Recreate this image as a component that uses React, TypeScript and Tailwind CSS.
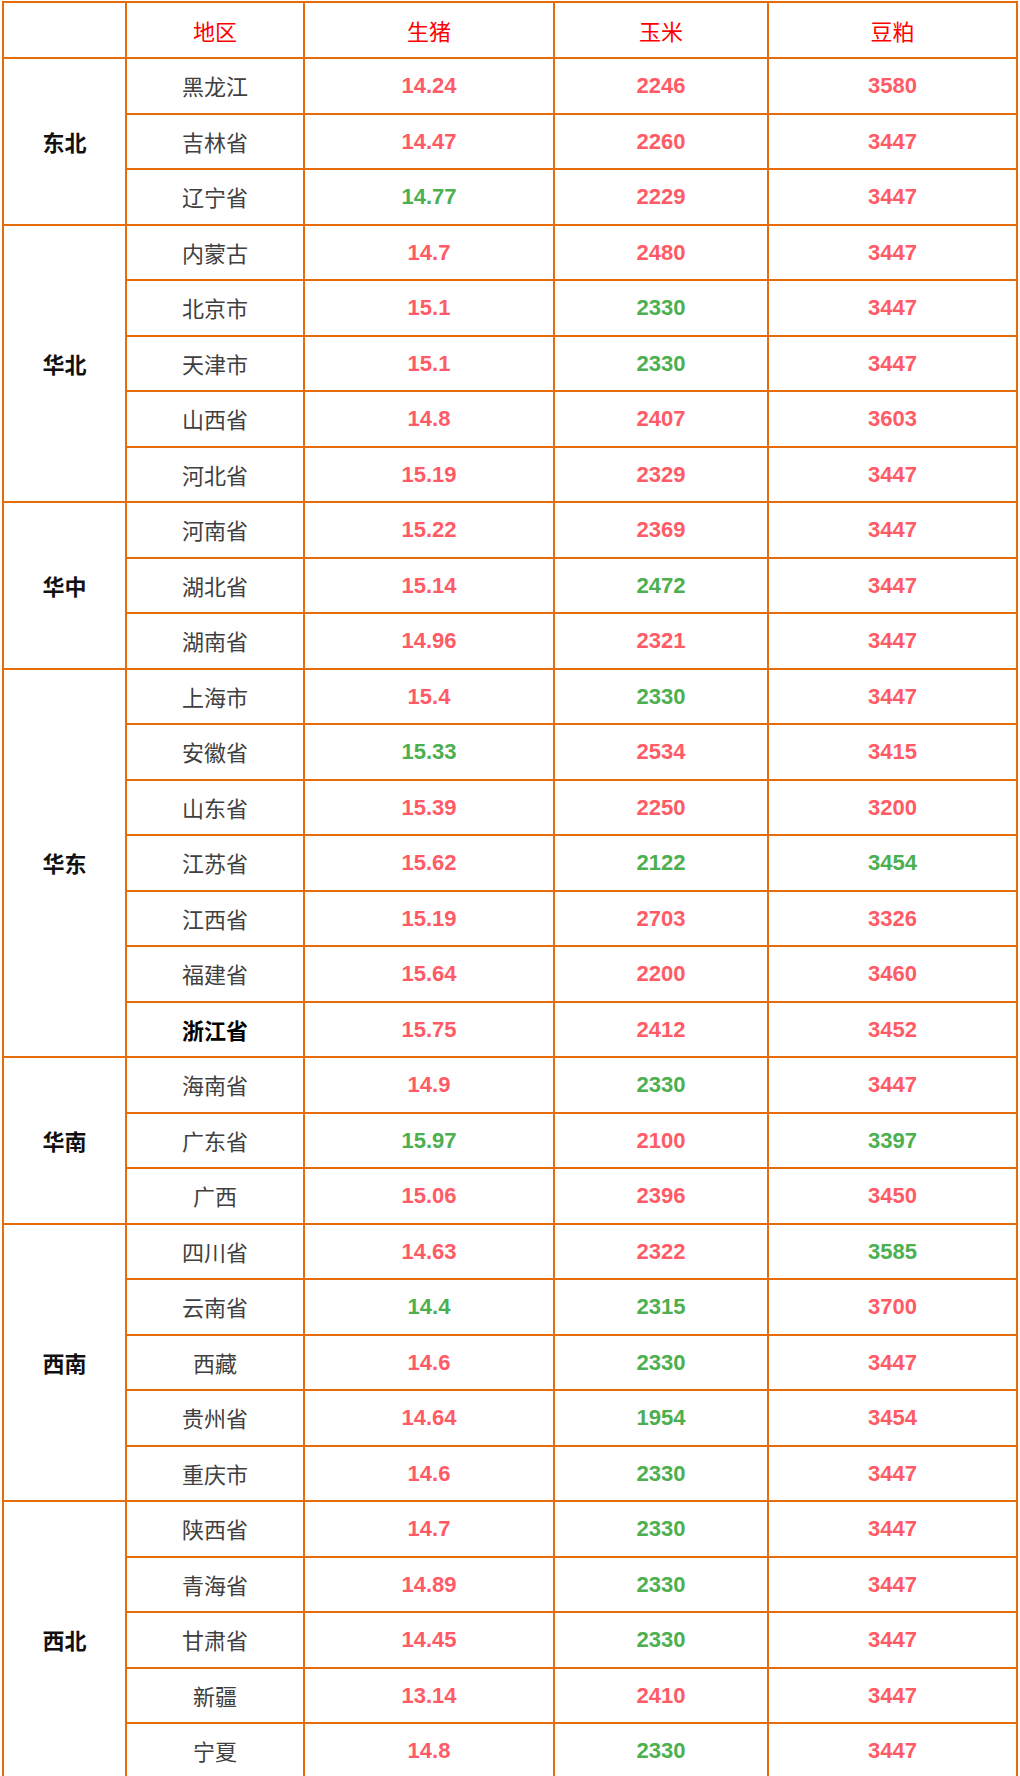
import React from 'react';

type Tone = 'r' | 'g';

interface Row {
  name: string;
  pig: [string, Tone];
  corn: [string, Tone];
  meal: [string, Tone];
  strong?: boolean;
}

interface Region {
  region: string;
  rows: Row[];
}

const r = (v: string): [string, Tone] => [v, 'r'];
const g = (v: string): [string, Tone] => [v, 'g'];

const data: Region[] = [
  {
    region: '东北',
    rows: [
      { name: '黑龙江', pig: r('14.24'), corn: r('2246'), meal: r('3580') },
      { name: '吉林省', pig: r('14.47'), corn: r('2260'), meal: r('3447') },
      { name: '辽宁省', pig: g('14.77'), corn: r('2229'), meal: r('3447') },
    ],
  },
  {
    region: '华北',
    rows: [
      { name: '内蒙古', pig: r('14.7'), corn: r('2480'), meal: r('3447') },
      { name: '北京市', pig: r('15.1'), corn: g('2330'), meal: r('3447') },
      { name: '天津市', pig: r('15.1'), corn: g('2330'), meal: r('3447') },
      { name: '山西省', pig: r('14.8'), corn: r('2407'), meal: r('3603') },
      { name: '河北省', pig: r('15.19'), corn: r('2329'), meal: r('3447') },
    ],
  },
  {
    region: '华中',
    rows: [
      { name: '河南省', pig: r('15.22'), corn: r('2369'), meal: r('3447') },
      { name: '湖北省', pig: r('15.14'), corn: g('2472'), meal: r('3447') },
      { name: '湖南省', pig: r('14.96'), corn: r('2321'), meal: r('3447') },
    ],
  },
  {
    region: '华东',
    rows: [
      { name: '上海市', pig: r('15.4'), corn: g('2330'), meal: r('3447') },
      { name: '安徽省', pig: g('15.33'), corn: r('2534'), meal: r('3415') },
      { name: '山东省', pig: r('15.39'), corn: r('2250'), meal: r('3200') },
      { name: '江苏省', pig: r('15.62'), corn: g('2122'), meal: g('3454') },
      { name: '江西省', pig: r('15.19'), corn: r('2703'), meal: r('3326') },
      { name: '福建省', pig: r('15.64'), corn: r('2200'), meal: r('3460') },
      { name: '浙江省', pig: r('15.75'), corn: r('2412'), meal: r('3452'), strong: true },
    ],
  },
  {
    region: '华南',
    rows: [
      { name: '海南省', pig: r('14.9'), corn: g('2330'), meal: r('3447') },
      { name: '广东省', pig: g('15.97'), corn: r('2100'), meal: g('3397') },
      { name: '广西', pig: r('15.06'), corn: r('2396'), meal: r('3450') },
    ],
  },
  {
    region: '西南',
    rows: [
      { name: '四川省', pig: r('14.63'), corn: r('2322'), meal: g('3585') },
      { name: '云南省', pig: g('14.4'), corn: g('2315'), meal: r('3700') },
      { name: '西藏', pig: r('14.6'), corn: g('2330'), meal: r('3447') },
      { name: '贵州省', pig: r('14.64'), corn: g('1954'), meal: r('3454') },
      { name: '重庆市', pig: r('14.6'), corn: g('2330'), meal: r('3447') },
    ],
  },
  {
    region: '西北',
    rows: [
      { name: '陕西省', pig: r('14.7'), corn: g('2330'), meal: r('3447') },
      { name: '青海省', pig: r('14.89'), corn: g('2330'), meal: r('3447') },
      { name: '甘肃省', pig: r('14.45'), corn: g('2330'), meal: r('3447') },
      { name: '新疆', pig: r('13.14'), corn: r('2410'), meal: r('3447') },
      { name: '宁夏', pig: r('14.8'), corn: g('2330'), meal: r('3447') },
    ],
  },
];

const cjk = "font-['Noto_Sans_CJK_SC',sans-serif]";
const cell = 'border-2 border-[#e46c0a] text-center align-middle p-0';

const Num: React.FC<{ v: [string, Tone] }> = ({ v }) => (
  <td
    className={`${cell} font-['Liberation_Sans',Arial,sans-serif] font-bold text-[22px] ${
      v[1] === 'g' ? 'text-[#4caf50]' : 'text-[#ff5b66]'
    }`}
  >
    {v[0]}
  </td>
);

export default function App() {
  return (
    <div className="bg-white min-h-screen pt-px">
      <table className="table-fixed border-collapse w-[1014px] mx-auto">
        <colgroup>
          <col className="w-[123px]" />
          <col className="w-[178px]" />
          <col className="w-[250px]" />
          <col className="w-[214px]" />
          <col className="w-[249px]" />
        </colgroup>
        <thead>
          <tr className="h-[56px]">
            <th className={cell}></th>
            {['地区', '生猪', '玉米', '豆粕'].map((h) => (
              <th key={h} className={`${cell} ${cjk} font-normal text-[22px] text-[#ff0000]`}>
                {h}
              </th>
            ))}
          </tr>
        </thead>
        <tbody>
          {data.map((grp) =>
            grp.rows.map((row, i) => (
              <tr key={row.name} className="h-[55.5px]">
                {i === 0 && (
                  <td
                    rowSpan={grp.rows.length}
                    className={`${cell} ${cjk} font-bold text-[22px] text-[#111]`}
                  >
                    {grp.region}
                  </td>
                )}
                <td
                  className={`${cell} ${cjk} text-[22px] ${
                    row.strong ? 'font-bold text-black' : 'text-[#404040]'
                  }`}
                >
                  {row.name}
                </td>
                <Num v={row.pig} />
                <Num v={row.corn} />
                <Num v={row.meal} />
              </tr>
            ))
          )}
        </tbody>
      </table>
    </div>
  );
}
